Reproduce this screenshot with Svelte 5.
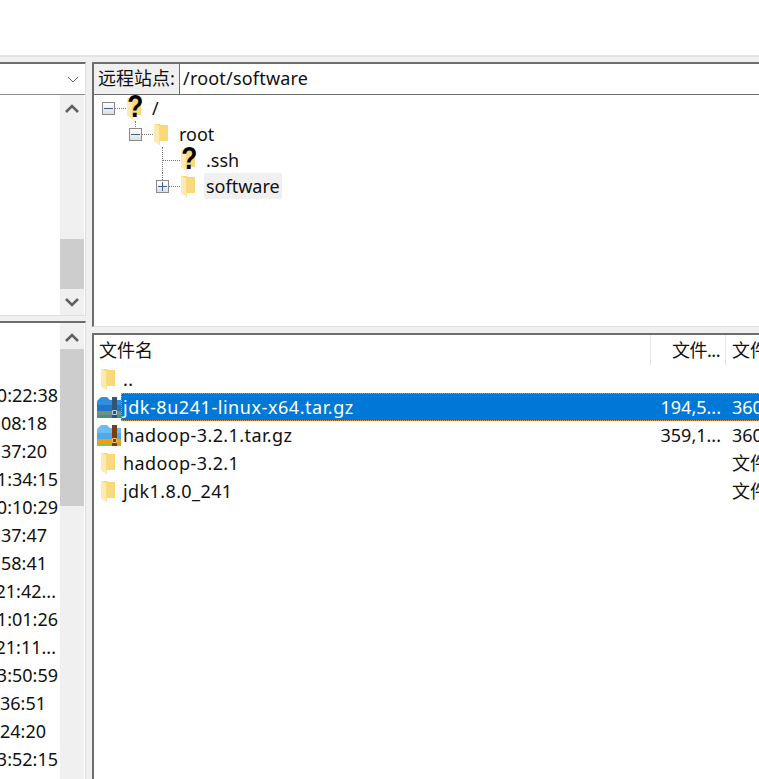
<script>
  const times = [
    ['0:22:38', 'long'], ['08:18', 'short'], ['37:20', 'short'], ['1:34:15', 'long'],
    ['0:10:29', 'long'], ['37:47', 'short'], ['58:41', 'short'], ['21:42...', 'mid'],
    ['1:01:26', 'long'], ['21:11...', 'mid'], ['3:50:59', 'long'], ['36:51', 'tiny'],
    ['24:20', 'tiny'], ['3:52:15', 'long']
  ]

  const files = [
    { name: '..', icon: 'folder' },
    { name: 'jdk-8u241-linux-x64.tar.gz', icon: 'zip', size: '194,5...', type: '360', selected: true },
    { name: 'hadoop-3.2.1.tar.gz', icon: 'zip', size: '359,1...', type: '360' },
    { name: 'hadoop-3.2.1', icon: 'folder', type: '文件' },
    { name: 'jdk1.8.0_241', icon: 'folder', type: '文件' }
  ]
</script>

{#snippet folder()}
  <svg class="folder" width="14" height="21" viewBox="0 0 14 21">
    <path d="M0 0h6l1 1h7v16H6v-14z" fill="#f9d771" />
    <path d="M5 3l9-1v15H5z" fill="#fad979" />
    <path d="M0 0l5.500 3v18L0 17.500z" fill="#fdeab0" />
    <path d="M5.500 3v18" stroke="#f5d27a" stroke-width="0.500" />
  </svg>
{/snippet}

{#snippet zip(selected)}
  <svg class="zip" width="24" height="21" viewBox="0 0 24 21">
    <path d="M0 5q0-1 1-2l2-2q1-1 2-1h5l3 3h11v11H0z" fill={selected ? '#2f8fdc' : '#6cbcf0'} />
    <path d="M0 8h24v6H0z" fill={selected ? '#1f78c4' : '#4ea9e8'} />
    <path d="M0 14h24v4H0z" fill={selected ? '#6f8f84' : '#f59b16'} />
    <path d="M0 18h24v3H0z" fill={selected ? '#4f8f78' : '#8cc34a'} />
    <path d="M15 0h5v21h-5z" fill={selected ? '#2f5578' : '#7a3e12'} />
    <path d="M15.500 13.500h4v4h-4z" fill="none" stroke={selected ? '#b9d3dc' : '#f1c76a'} />
  </svg>
{/snippet}

{#snippet box(open)}
  <span class="box">
    <span class="bar"></span>
    {#if !open}<span class="stem"></span>{/if}
  </span>
{/snippet}

<div class="window">
  <div class="top"></div>
  <div class="main">
    <div class="left">
      <div class="pane upper">
        <div class="combo">
          <svg width="12" height="7" viewBox="0 0 12 7"><path d="M1 1l5 5 5-5" fill="none" stroke="#666" stroke-width="1" /></svg>
        </div>
        <div class="body">
          <div class="blank"></div>
          <div class="scroll">
            <button class="arrow">
              <svg width="14" height="9" viewBox="0 0 14 9"><path d="M1 8l6-6 6 6" fill="none" stroke="#606060" stroke-width="2.600" /></svg>
            </button>
            <div class="track t1"><div class="thumb th1"></div></div>
            <button class="arrow">
              <svg width="14" height="9" viewBox="0 0 14 9"><path d="M1 1l6 6 6-6" fill="none" stroke="#606060" stroke-width="2.600" /></svg>
            </button>
          </div>
        </div>
      </div>
      <div class="pane lower">
        <div class="body">
          <div class="times">
            {#each times as [t, cls]}
              <div class="time {cls}"><span>{t}</span></div>
            {/each}
          </div>
          <div class="scroll">
            <button class="arrow">
              <svg width="14" height="9" viewBox="0 0 14 9"><path d="M1 8l6-6 6 6" fill="none" stroke="#606060" stroke-width="2.600" /></svg>
            </button>
            <div class="track"><div class="thumb th2"></div></div>
          </div>
        </div>
      </div>
    </div>

    <div class="right">
      <div class="pane r-upper">
        <div class="site">
          <div class="site-label">远程站点:</div>
          <div class="site-path">/root/software</div>
        </div>
        <div class="tree">
          <div class="row">
            {@render box(true)}<span class="dots"></span>
            <span class="ic">{@render folder()}<b class="q">?</b></span>
            <span class="label">/</span>
          </div>
          <div class="row d1 link-up">
            {@render box(true)}<span class="dots"></span>
            <span class="ic">{@render folder()}</span>
            <span class="label">root</span>
          </div>
          <div class="row d2 link-v">
            <span class="dots long"></span>
            <span class="ic">{@render folder()}<b class="q">?</b></span>
            <span class="label">.ssh</span>
          </div>
          <div class="row d2 link-last">
            {@render box(false)}<span class="dots"></span>
            <span class="ic">{@render folder()}</span>
            <span class="label hover">software</span>
          </div>
        </div>
      </div>
      <div class="pane r-lower">
        <div class="head">
          <div class="c-name">文件名</div>
          <div class="c-size">文件...</div>
          <div class="c-type">文件</div>
        </div>
        {#each files as f}
          <div class="file" class:sel={f.selected}>
            <span class="file-ic">
              {#if f.icon === 'zip'}{@render zip(f.selected)}{:else}{@render folder()}{/if}
            </span>
            <div class="file-cells">
              <span class="c-name">{f.name}</span>
              <span class="c-size">{f.size ?? ''}</span>
              <span class="c-type">{f.type ?? ''}</span>
            </div>
          </div>
        {/each}
      </div>
    </div>
  </div>
</div>

<style>
  :global(body) {
    margin: 0;
    overflow: hidden;
  }
  .window {
    width: 759px;
    height: 779px;
    display: flex;
    flex-direction: column;
    background: #f0f0f0;
    overflow: hidden;
    font-family: "Noto Sans", "Noto Sans CJK SC", sans-serif;
    font-size: 18px;
    color: #111;
  }
  .top {
    height: 55px;
    background: #fff;
    border-bottom: 2px solid #e4e4e4;
    flex: none;
  }
  .main {
    flex: 1;
    display: flex;
    gap: 6px;
    padding-top: 5px;
    min-height: 0;
  }
  .left {
    width: 86px;
    display: flex;
    flex-direction: column;
    gap: 5px;
    flex: none;
  }
  .right {
    flex: 1;
    min-width: 0;
    display: flex;
    flex-direction: column;
    gap: 6px;
  }
  .pane {
    background: #fff;
    border-top: 2px solid #6d6d6d;
    display: flex;
    flex-direction: column;
    min-height: 0;
    box-sizing: border-box;
  }
  .upper { height: 254px; flex: none; border-right: 1px solid #e0e0e0; border-bottom: 1px solid #e0e0e0; }
  .lower { flex: 1; border-right: 1px solid #e0e0e0; }
  .r-upper { height: 265px; flex: none; border-left: 2px solid #6d6d6d; border-bottom: 1px solid #e0e0e0; }
  .r-lower { flex: 1; border-left: 2px solid #6d6d6d; }
  .combo {
    height: 30px;
    flex: none;
    border-bottom: 1px solid #8c8c8c;
    display: flex;
    align-items: center;
    justify-content: flex-end;
    padding-right: 6px;
  }
  .body {
    flex: 1;
    display: flex;
    min-height: 0;
  }
  .blank { flex: 1; }
  .scroll {
    width: 24px;
    flex: none;
    margin-right: 1px;
    background: #f0f0f0;
    display: flex;
    flex-direction: column;
  }
  .arrow {
    height: 26px;
    flex: none;
    border: 0;
    padding: 0;
    background: #f0f0f0;
    display: flex;
    align-items: center;
    justify-content: center;
  }
  .lower .arrow { padding-top: 2px; box-sizing: border-box; }
  .track {
    flex: 1;
    display: flex;
    flex-direction: column;
  }
  .t1 { justify-content: flex-end; }
  .thumb { background: #cdcdcd; flex: none; }
  .th1 { height: 50px; }
  .th2 { height: 157px; }
  .times {
    flex: 1;
    min-width: 0;
    padding-top: 58px;
    overflow: hidden;
  }
  .time {
    height: 28px;
    line-height: 28px;
    display: flex;
    justify-content: flex-end;
    white-space: nowrap;
  }
  .time span { flex: none; }
  .long { padding-right: 2px; }
  .mid { padding-right: 4px; }
  .short { padding-right: 13px; }
  .tiny { padding-right: 14px; }
  .site {
    display: flex;
    height: 30px;
    flex: none;
    border-bottom: 1px solid #6d6d6d;
  }
  .site-label {
    width: 86px;
    flex: none;
    background: #f0f0f0;
    border-right: 1px solid #6d6d6d;
    padding-left: 4px;
    box-sizing: border-box;
    line-height: 29px;
    white-space: nowrap;
  }
  .site-path {
    padding-left: 3px;
    line-height: 29px;
    letter-spacing: 0.2px;
  }
  .tree { flex: 1; }
  .row {
    height: 26px;
    display: flex;
    align-items: center;
    padding-left: 8px;
    position: relative;
  }
  .d1 { padding-left: 35px; }
  .d2 { padding-left: 62px; }
  .box {
    width: 11px;
    height: 11px;
    border: 1px solid #8a8a8a;
    background: linear-gradient(#fff, #dedede);
    flex: none;
    position: relative;
  }
  .bar {
    position: absolute;
    left: 1px;
    right: 1px;
    top: 5px;
    height: 1px;
    background: #3f5f9a;
  }
  .stem {
    position: absolute;
    top: 1px;
    bottom: 1px;
    left: 5px;
    width: 1px;
    background: #3f5f9a;
  }
  .dots {
    width: 11px;
    border-top: 1px dotted #777;
    flex: none;
    margin-right: 1px;
  }
  .dots.long {
    width: 15px;
    margin-left: 7px;
  }
  .link-up::before,
  .link-v::before,
  .link-last::before {
    content: '';
    position: absolute;
    border-left: 1px dotted #777;
  }
  .link-up::before { left: 41px; top: 0; height: 6px; }
  .link-v::before { left: 68px; top: 0; height: 26px; }
  .link-last::before { left: 68px; top: 0; height: 7px; }
  .ic {
    position: relative;
    width: 14px;
    flex: none;
    display: flex;
  }
  .q {
    position: absolute;
    left: -1px;
    top: -8px;
    width: 17px;
    text-align: center;
    font: bold 31px/34px "Liberation Sans", sans-serif;
    color: #000;
    transform: scaleX(0.85);
  }
  .folder, .zip { display: block; }
  .label {
    margin-left: 9px;
    padding: 0 2px;
    height: 26px;
    line-height: 26px;
  }
  .hover { background: #f0f0f0; }
  .head {
    height: 30px;
    flex: none;
    display: flex;
    line-height: 31px;
  }
  .head .c-name { padding-left: 5px; letter-spacing: 0; }
  .c-name {
    flex: 1;
    min-width: 0;
    white-space: nowrap;
    letter-spacing: 0.4px;
  }
  .c-size {
    width: 75px;
    flex: none;
    box-sizing: border-box;
    text-align: right;
    padding-right: 4px;
    white-space: nowrap;
  }
  .c-type {
    width: 34px;
    flex: none;
    padding-left: 7px;
    box-sizing: border-box;
    white-space: nowrap;
    overflow: hidden;
  }
  .head .c-size { border-left: 1px solid #e4e4e4; padding-right: 5px; letter-spacing: -0.5px; }
  .head .c-type { border-left: 1px solid #e4e4e4; padding-left: 6px; }
  .file {
    height: 28px;
    display: flex;
    align-items: center;
  }
  .file-ic {
    width: 27px;
    padding-left: 3px;
    box-sizing: border-box;
    flex: none;
    display: flex;
  }
  .file-cells {
    flex: 1;
    min-width: 0;
    display: flex;
    height: 28px;
    line-height: 28px;
    box-sizing: border-box;
  }
  .file:not(.sel) .folder { margin-left: 4px; }
  .file-cells .c-name { padding-left: 2px; }
  .sel .file-cells {
    background: #0078d7;
    color: #fff;
    border: 1px dotted #e8912d;
    border-right: 0;
    line-height: 26px;
  }
  .sel .file-cells .c-name { padding-left: 1px; letter-spacing: 0.55px; }
</style>
